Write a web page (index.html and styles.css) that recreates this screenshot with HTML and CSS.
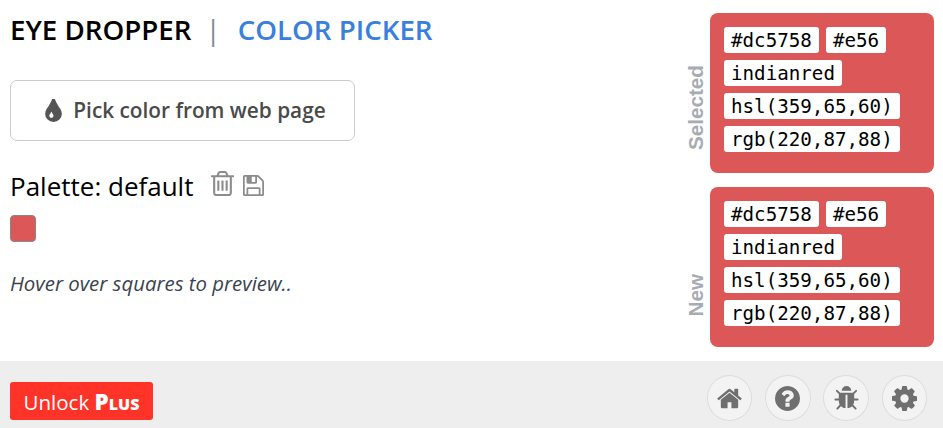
FILE: index.html
```html
<!DOCTYPE html>
<html lang="en">
<head>
<meta charset="utf-8">
<title>Eye Dropper</title>
<link rel="stylesheet" href="styles.css">
</head>
<body>
<div class="page">
  <main class="main">
    <section class="left">
      <nav class="tabs">
        <span class="tab tab-active">EYE DROPPER</span>
        <span class="tab-sep">|</span>
        <span class="tab tab-link">COLOR PICKER</span>
      </nav>
      <button class="pick">
        <svg class="pick-icon" viewBox="384 128 1024 1408"><path d="M896 1152q0-36-20-69-1-1-15.5-22.5t-25.5-38-25-44-21-50.5q-4-16-21-16t-21 16q-7 23-21 50.5t-25 44-25.5 38-15.5 22.5q-20 33-20 69 0 53 37.5 90.5t90.5 37.5 90.5-37.5 37.5-90.5zm512-128q0 212-150 362t-362 150-362-150-150-362q0-145 81-275 6-9 62.5-90.5t101-151 99.5-178 83-201.5q9-30 34-47t51-17 51.5 17 33.5 47q28 93 83 201.5t99.5 178 101 151 62.5 90.5q81 127 81 275z"/></svg>
        <span>Pick color from web page</span>
      </button>
      <div class="palette-head">
        <span class="palette-title">Palette: default</span>
        <svg class="tool tool-trash" viewBox="128 128 1536 1536"><path d="M704 736v576q0 14-9 23t-23 9h-64q-14 0-23-9t-9-23v-576q0-14 9-23t23-9h64q14 0 23 9t9 23zm256 0v576q0 14-9 23t-23 9h-64q-14 0-23-9t-9-23v-576q0-14 9-23t23-9h64q14 0 23 9t9 23zm256 0v576q0 14-9 23t-23 9h-64q-14 0-23-9t-9-23v-576q0-14 9-23t23-9h64q14 0 23 9t9 23zm128 724v-948h-896v948q0 22 7 40.5t14.5 27 10.5 8.5h832q3 0 10.5-8.5t14.5-27 7-40.5zm-672-1076h448l-48-117q-7-9-17-11h-317q-10 2-17 11zm928 32v64q0 14-9 23t-23 9h-96v948q0 83-47 143.5t-113 60.5h-832q-66 0-113-58.5t-47-141.5v-952h-96q-14 0-23-9t-9-23v-64q0-14 9-23t23-9h309l70-167q15-37 54-63t79-26h320q40 0 79 26t54 63l70 167h309q14 0 23 9t9 23z"/></svg>
        <svg class="tool tool-save" viewBox="128 128 1536 1536"><path d="M512 1536h768v-384h-768v384zm896 0h128v-896q0-14-10-38.5t-20-34.5l-281-281q-10-10-34-20t-39-10v416q0 40-28 68t-68 28h-576q-40 0-68-28t-28-68v-416h-128v1280h128v-416q0-40 28-68t68-28h832q40 0 68 28t28 68v416zm-384-928v-320q0-13-9.5-22.5t-22.5-9.5h-192q-13 0-22.5 9.5t-9.5 22.5v320q0 13 9.5 22.5t22.5 9.5h192q13 0 22.5-9.5t9.5-22.5zm640 32v928q0 40-28 68t-68 28h-1344q-40 0-68-28t-28-68v-1344q0-40 28-68t68-28h928q40 0 88 20t76 48l280 280q28 28 48 76t20 88z"/></svg>
      </div>
      <div class="swatch"></div>
      <p class="hint">Hover over squares to preview..</p>
    </section>
    <section class="right">
      <div class="color-row">
        <span class="side-label side-selected">Selected</span>
        <div class="card">
          <div class="tag-line"><span class="tag">#dc5758</span><span class="tag">#e56</span></div>
          <div class="tag-line"><span class="tag">indianred</span></div>
          <div class="tag-line"><span class="tag">hsl(359,65,60)</span></div>
          <div class="tag-line"><span class="tag">rgb(220,87,88)</span></div>
        </div>
      </div>
      <div class="color-row">
        <span class="side-label side-new">New</span>
        <div class="card">
          <div class="tag-line"><span class="tag">#dc5758</span><span class="tag">#e56</span></div>
          <div class="tag-line"><span class="tag">indianred</span></div>
          <div class="tag-line"><span class="tag">hsl(359,65,60)</span></div>
          <div class="tag-line"><span class="tag">rgb(220,87,88)</span></div>
        </div>
      </div>
    </section>
  </main>
  <footer class="footer">
    <button class="unlock">Unlock <b class="plus">Plus</b></button>
    <div class="round-group">
      <span class="round"><svg class="round-icon round-icon-home" viewBox="0 128 1792 1536"><path d="M1472 992v480q0 26-19 45t-45 19h-384v-384h-256v384h-384q-26 0-45-19t-19-45v-480q0-1 .5-3t.5-3l575-474 575 474q1 2 1 6zm223-69l-62 74q-8 9-21 11h-3q-13 0-21-7l-692-577-692 577q-12 8-24 7-13-2-21-11l-62-74q-8-10-7-23.5t11-21.5l719-599q32-26 76-26t76 26l244 204v-195q0-14 9-23t23-9h192q14 0 23 9t9 23v408l219 182q10 8 11 21.5t-7 23.5z"/></svg></span>
      <span class="round"><svg class="round-icon" viewBox="128 128 1536 1536"><path d="M1024 1376v-192q0-14-9-23t-23-9h-192q-14 0-23 9t-9 23v192q0 14 9 23t23 9h192q14 0 23-9t9-23zm256-672q0-88-55.5-163t-138.5-116-170-41q-243 0-371 213-15 24 8 42l132 100q7 6 19 6 16 0 25-12 53-68 86-92 34-24 86-24 48 0 85.5 26t37.5 59q0 38-20 61t-68 45q-63 28-115.5 86.5t-52.5 125.5v36q0 14 9 23t23 9h192q14 0 23-9t9-23q0-19 21.5-49.5t54.5-49.5q32-18 49-28.5t46-35 44.5-48 28-60.5 12.5-81zm384 192q0 209-103 385.5t-279.5 279.5-385.5 103-385.5-103-279.5-279.5-103-385.5 103-385.5 279.5-279.5 385.5-103 385.5 103 279.5 279.5 103 385.5z"/></svg></span>
      <span class="round"><svg class="round-icon" viewBox="64 64 1664 1664"><path d="M1696 960q0 26-19 45t-45 19h-224q0 171-67 290l208 209q19 19 19 45t-19 45q-18 19-45 19t-45-19l-198-197q-5 5-15 13t-42 28.5-65 36.5-82 29-97 13v-896h-128v896q-51 0-101.5-13.5t-87-33-66-39-43.5-32.5l-15-14-183 207q-20 21-48 21-24 0-43-16-19-18-20.5-44.5t15.5-46.5l202-227q-58-114-58-274h-224q-26 0-45-19t-19-45 19-45 45-19h224v-294l-173-173q-19-19-19-45t19-45 45-19 45 19l173 173h844l173-173q19-19 45-19t45 19 19 45-19 45l-173 173v294h224q26 0 45 19t19 45zm-480-576h-640q0-133 93.5-226.5t226.5-93.5 226.5 93.5 93.5 226.5z"/></svg></span>
      <span class="round"><svg class="round-icon" viewBox="128 128 1536 1536"><path d="M1152 896q0-106-75-181t-181-75-181 75-75 181 75 181 181 75 181-75 75-181zm512-109v222q0 12-8 23t-20 13l-185 28q-19 54-39 91 35 50 107 138 10 12 10 25t-9 23q-27 37-99 108t-94 71q-12 0-26-9l-138-108q-44 23-91 38-16 136-29 186-7 28-36 28h-222q-14 0-24.5-8.5t-11.5-21.5l-28-184q-49-16-90-37l-141 107q-10 9-25 9-14 0-25-11-126-114-165-168-7-10-7-23 0-12 8-23 15-21 51-66.5t54-70.5q-27-50-41-99l-183-27q-13-2-21-12.5t-8-23.5v-222q0-12 8-23t19-13l186-28q14-46 39-92-40-57-107-138-10-12-10-24 0-10 9-23 26-36 98.5-107.5t94.5-71.5q13 0 26 10l138 107q44-23 91-38 16-136 29-186 7-28 36-28h222q14 0 24.5 8.5t11.5 21.5l28 184q49 16 90 37l142-107q9-9 24-9 13 0 25 10 129 119 165 170 7 8 7 22 0 12-8 23-15 21-51 66.5t-54 70.5q26 50 41 98l183 28q13 2 21 12.5t8 23.5z"/></svg></span>
    </div>
  </footer>
</div>
</body>
</html>
```

FILE: styles.css
```css
* { box-sizing: border-box; }
html, body { margin: 0; padding: 0; }
body { font-family: "Open Sans", "Noto Sans", sans-serif; background: #fff; color: #000; overflow: hidden; }
.page { width: 943px; height: 428px; display: flex; flex-direction: column; }
.main { height: 361px; display: flex; justify-content: space-between; }
.left { padding: 10px 0 0 10px; }
.tabs { display: flex; align-items: center; height: 40px; padding-bottom: 2px; font-size: 27.7px; font-weight: 600; }
.tab-active { color: #000; }
.tab-sep { color: #7f8a99; font-weight: 400; margin: 0 17px 0 14px; }
.tab-link { color: #3a7fdc; }
.pick { margin-top: 30px; width: 345px; height: 61px; display: flex; align-items: center; justify-content: center; gap: 11px; background: #fff; border: 1px solid #ccc; border-radius: 7px; font: 600 20.8px "Open Sans", sans-serif; color: #4a4a4a; padding: 0 0 2px 6px; }
.pick-icon { width: 17px; height: 23px; fill: #555; margin-top: 2px; }
.palette-head { display: flex; align-items: flex-start; margin-top: 28px; height: 36px; }
.palette-title { font-size: 26px; line-height: 35px; }
.tool { fill: #8c8c8c; }
.tool-trash { width: 25px; height: 25px; margin: 2px 0 0 16.5px; }
.tool-save { width: 21px; height: 21px; margin: 6px 0 0 8.5px; }
.swatch { width: 26px; height: 27px; margin-top: 10px; background: #dc5758; border: 1px solid #888; border-radius: 4px; }
.hint { margin: 27px 0 0; font-size: 20.4px; line-height: 28px; font-style: italic; color: #3b4350; }
.right { padding: 13px 9px 0 0; display: flex; flex-direction: column; gap: 14px; }
.color-row { display: flex; align-items: flex-end; gap: 5px; }
.side-label { writing-mode: vertical-rl; transform: rotate(180deg); font: bold 20.7px "Liberation Sans", sans-serif; color: #a7abb3; line-height: 19px; }
.side-selected { padding-top: 23px; }
.side-new { padding-top: 30px; }
.card { width: 224px; height: 160px; padding: 14px; background: #dc5758; border-radius: 8px; display: flex; flex-direction: column; gap: 7px; }
.tag-line { display: flex; gap: 7px; }
.tag { height: 26px; padding: 0 7px; background: #fff; border-radius: 3px; color: #000; font: 19.2px/27px "DejaVu Sans Mono", monospace; }
.footer { height: 67px; background: #eee; display: flex; align-items: center; justify-content: space-between; padding: 0 16px 0 10px; }
.unlock { width: 143px; height: 38px; margin-top: 13px; border: 0; border-radius: 3px; background: #ff3327; color: #fff; font: 400 20.5px "Open Sans", sans-serif; padding: 0; }
.plus { font-weight: 800; font-size: 22.5px; font-variant: small-caps; }
.round-group { display: flex; gap: 12.7px; margin-top: 7px; }
.round { width: 45.5px; height: 46px; display: flex; align-items: center; justify-content: center; border-radius: 50%; background: #f3f3f3; border: 1px solid #ddd; }
.round-icon { width: 25px; height: 25px; fill: #6f6f6f; }
.round-icon-home { width: 27px; }
```
